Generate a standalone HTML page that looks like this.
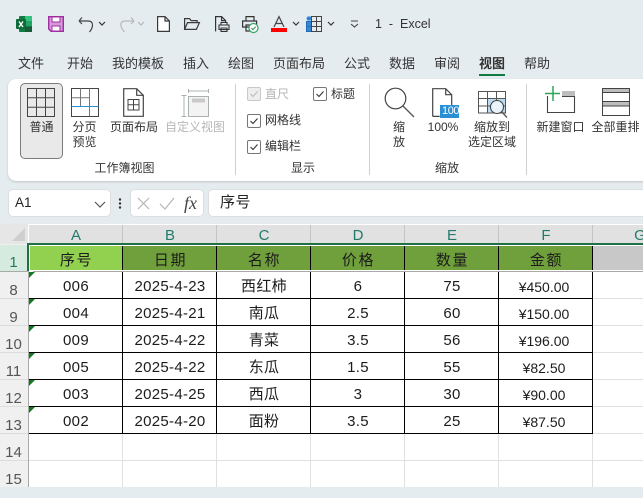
<!DOCTYPE html>
<html lang="zh"><head><meta charset="utf-8"><style>
html,body{margin:0;padding:0}
body{width:643px;height:487px;overflow:hidden;position:relative;background:#e5ecf0;font-family:"Liberation Sans","Noto Sans CJK SC",sans-serif;color:#2a2a2a}
.a{position:absolute}
.t{position:absolute;white-space:nowrap;font-size:12px;line-height:15px;text-align:center;color:#333}
.tab{position:absolute;top:55px;font-size:13px;line-height:18px;white-space:nowrap;color:#333}
svg{position:absolute;overflow:visible;fill:none}
.c{position:absolute;height:27px;line-height:30px;width:94px;text-align:center;font-size:15px;letter-spacing:.3px;color:#1c1c1c}
.m{font-size:14px;letter-spacing:0;margin-left:-2px}
.h{font-size:15px;letter-spacing:1.6px;line-height:32px;padding-left:1px;width:93px}
.ch{position:absolute;top:225px;height:19px;line-height:22px;width:94px;text-align:center;font-size:15px;color:#217a6b;background:#e1e1e1}
.rh{position:absolute;left:0;width:27px;height:27px;line-height:37px;text-align:center;font-size:15px;color:#555}
.tri{position:absolute;left:29px;width:0;height:0;border-top:6px solid #0f7b1e;border-right:6px solid transparent}
.cb{position:absolute;width:12px;height:12px;border:1px solid #777;border-radius:2px;background:#fff}
.cb svg{left:0;top:0}
</style></head><body>

<!-- quick access -->
<svg style="left:16px;top:16px" width="16" height="16"><rect x="3" y="0" width="13" height="16" rx="1" fill="#107c41"/><rect x="9" y="0" width="7" height="5" fill="#33c481"/><rect x="9" y="5" width="7" height="5" fill="#21a366"/><rect x="9" y="11" width="7" height="5" fill="#185c37"/><rect x="0" y="3" width="10" height="10" rx="1" fill="#0d6b38"/><path d="M3 5.500l4 5.500M7 5.500l-4 5.500" stroke="#fff" stroke-width="1.400"/></svg>
<svg style="left:48px;top:16px" width="16" height="16"><path d="M.7.700h14.600v14.600H3L.7 13z" fill="#d79ad9" stroke="#9e2fa1" stroke-width="1.400"/><rect x="4" y="1" width="8" height="5" fill="#fff" stroke="#9e2fa1"/><rect x="4" y="10" width="8" height="5" fill="#fff" stroke="#9e2fa1"/></svg>
<svg style="left:78px;top:15px" width="18" height="18"><path d="M1 6h9c6 0 5.500 6 1.500 11M1 6l3-3.500M1 6l3 3" stroke="#444" stroke-width="1.200"/></svg>
<svg style="left:98px;top:21px" width="8" height="5"><path d="M1 1l3 3 3-3" stroke="#333" stroke-width="1.200"/></svg>
<svg style="left:117px;top:15px" width="18" height="18"><path d="M17 6H8C2 6 3 12 7.500 17M17 6l-3-3.500M17 6l-3 3" stroke="#b3b8bb" stroke-width="1.200"/></svg>
<svg style="left:137px;top:21px" width="8" height="5"><path d="M1 1l3 3 3-3" stroke="#b3b8bb" stroke-width="1.200"/></svg>
<svg style="left:157px;top:16px" width="13" height="16"><path d="M.6.600h7.400l4.400 4.400v10.400H.6zM8 .6v4.400h4.400" fill="#fff" stroke="#3a3a3a" stroke-width="1.200"/></svg>
<svg style="left:184px;top:18px" width="16" height="12"><path d="M.6 11V.6h5l1.500 2h6v2M.6 11.400h11.800L15.400 4.600H3.500L.6 11.400z" stroke="#3a3a3a" stroke-width="1.200"/></svg>
<svg style="left:215px;top:16px" width="14" height="16"><path d="M.6 15.400V.6h6l4 4v2M6.600.6v4h4" stroke="#333" stroke-width="1.200"/><path d="M4 9h10v4.500H4zM6 9V6.500h6V9M6 12h6v3.400H6z" fill="#e5ecf0" stroke="#333" stroke-width="1.100"/></svg>
<svg style="left:242px;top:16px" width="17" height="17"><path d="M4 5V.6h8V5M.6 5h14v6H.6zM4 9h5v6H4z" fill="#e5ecf0" stroke="#333" stroke-width="1.200"/><circle cx="11.500" cy="12" r="4.500" fill="#fff" stroke="#3fa869" stroke-width="1.300"/><path d="M9.300 12l1.700 1.700 2.800-3" stroke="#3fa869" stroke-width="1.200"/></svg>
<div class="a" style="left:271px;top:28px;width:16px;height:4px;background:#ff0000"></div>
<svg style="left:272px;top:16px" width="14" height="11"><path d="M2 11L7 .6l5 10.400M3.800 7.500h6.400" stroke="#444" stroke-width="1.200"/></svg>
<svg style="left:292px;top:21px" width="8" height="5"><path d="M1 1l3 3 3-3" stroke="#333" stroke-width="1.200"/></svg>
<svg style="left:306px;top:16px" width="16" height="16"><rect x=".5" y="5.500" width="5" height="5" fill="#3a87cf" stroke="#1f6fb8"/><rect x=".5" y="10.500" width="5" height="5" fill="#3a87cf" stroke="#1f6fb8"/><path d="M5.500 .5h10v15h-10zM5.500 5.500h10M5.500 10.500h10M10.500.5v15" stroke="#444"/><path d="M3 0v5M.5 2.500h5M1 .7l4 3.600M5 .7l-4 3.600" stroke="#1f7fd0"/></svg>
<svg style="left:327px;top:21px" width="8" height="5"><path d="M1 1l3 3 3-3" stroke="#333" stroke-width="1.200"/></svg>
<svg style="left:350px;top:20px" width="9" height="8"><path d="M1 1h7M1 4l3.500 3L8 4" stroke="#444" stroke-width="1.100"/></svg>
<div class="t" style="left:375px;top:16px;font-size:12.500px;line-height:16px">1&nbsp; -&nbsp; Excel</div>

<!-- tabs -->
<div class="tab" style="left:18px">文件</div>
<div class="tab" style="left:67px">开始</div>
<div class="tab" style="left:112px">我的模板</div>
<div class="tab" style="left:183px">插入</div>
<div class="tab" style="left:228px">绘图</div>
<div class="tab" style="left:273px">页面布局</div>
<div class="tab" style="left:344px">公式</div>
<div class="tab" style="left:389px">数据</div>
<div class="tab" style="left:434px">审阅</div>
<div class="tab" style="left:479px;font-weight:700">视图</div>
<div class="a" style="left:479px;top:73.500px;width:26px;height:2px;background:#107c41"></div>
<div class="tab" style="left:524px">帮助</div>

<!-- ribbon -->
<div class="a" style="left:8px;top:79px;width:660px;height:102px;background:#fff;border-radius:8px;box-shadow:0 1px 2px rgba(0,0,0,.18)"></div>
<div class="a" style="left:20px;top:83px;width:41px;height:74px;background:#e9e9e9;border:1px solid #7b7b7b;border-radius:5px"></div>
<svg style="left:27px;top:88px" width="28" height="29"><path d="M.5.500h27v28H.5zM.5 9.800h27M.5 19.200h27M9.500.5v28M18.500.5v28" stroke="#444"/></svg>
<svg style="left:71px;top:88px" width="28" height="29"><path d="M.5.500h27v28H.5z" stroke="#444"/><path d="M.5 9.800h18M9.500.5v18" stroke="#777"/><path d="M.5 18.500h27M18.500.5v28" stroke="#2e8fd0"/></svg>
<svg style="left:123px;top:88px" width="21" height="29"><path d="M.7.700h13l6.600 6.600v21H.7zM13.700.7v6.600h6.600" stroke="#444" stroke-width="1.200"/><path d="M5 11.500h11v10.500H5zM5 16.700h11M10.500 11.500v10.500" stroke="#444"/></svg>
<svg style="left:181px;top:88px" width="28" height="30" stroke="#aab0b2"><path d="M7.500 1v4M27.500 1v4M7.500 3h20" stroke-width="1"/><path d="M.5 7.500h5M.5 28.500h5M3 7.500v21"/><rect x="7.500" y="8.500" width="20" height="20" fill="#f3f3f3"/><rect x="11" y="10.500" width="13" height="4" fill="#c9c9c9" stroke="none"/></svg>

<div class="t" style="left:20px;width:43px;top:120px;font-size:12px">普通</div>
<div class="t" style="left:63px;width:43px;top:120px">分页<br>预览</div>
<div class="t" style="left:106px;width:56px;top:120px">页面布局</div>
<div class="t" style="left:160px;width:70px;top:120px;color:#b7b7b7">自定义视图</div>
<div class="t" style="left:94px;width:61px;top:161px">工作簿视图</div>
<div class="a" style="left:235px;top:84px;width:1px;height:91px;background:#cfcfcf"></div>

<div class="cb" style="left:247px;top:87px;border-color:#c9c9c9;background:#eee"><svg width="12" height="12"><path d="M2.500 6l2.500 2.500 4.500-5" stroke="#bbb" stroke-width="1.100"/></svg></div>
<div class="t" style="left:265px;top:87px;color:#b5b5b5">直尺</div>
<div class="cb" style="left:313px;top:87px"><svg width="12" height="12"><path d="M2.500 6l2.500 2.500 4.500-5" stroke="#333" stroke-width="1.100"/></svg></div>
<div class="t" style="left:331px;top:87px">标题</div>
<div class="cb" style="left:247px;top:114px"><svg width="12" height="12"><path d="M2.500 6l2.500 2.500 4.500-5" stroke="#333" stroke-width="1.100"/></svg></div>
<div class="t" style="left:265px;top:113px">网格线</div>
<div class="cb" style="left:247px;top:140px"><svg width="12" height="12"><path d="M2.500 6l2.500 2.500 4.500-5" stroke="#333" stroke-width="1.100"/></svg></div>
<div class="t" style="left:265px;top:139px">编辑栏</div>
<div class="t" style="left:291px;top:161px">显示</div>
<div class="a" style="left:369px;top:84px;width:1px;height:91px;background:#cfcfcf"></div>

<svg style="left:384px;top:87px" width="31" height="31"><circle cx="11.500" cy="11.500" r="10.300" stroke="#444" stroke-width="1.200"/><path d="M19 19l11 11" stroke="#555" stroke-width="1.300"/></svg>
<div class="t" style="left:389px;width:20px;top:120px">缩<br>放</div>
<svg style="left:432px;top:88px" width="27" height="30"><path d="M.7 28.400V.700h13l6 6V17M13.700.7v6h6M.7 28.400h7" stroke="#444" stroke-width="1.200"/><rect x="8" y="17" width="19" height="13" fill="#2b8fd6"/></svg>
<div class="t" style="left:442px;top:105px;font-size:11px;line-height:13px;color:#fff;letter-spacing:-.4px">100</div>
<div class="t" style="left:425px;width:36px;top:120px">100%</div>
<svg style="left:478px;top:91px" width="30" height="27"><rect x="10" y="8" width="18" height="14" fill="#bcdcf3"/><path d="M.5.500h27v21.500H.5zM.5 7.500h27M.5 15h27M9.500.5v21.500M18.500.5v21.500" stroke="#555"/><circle cx="19" cy="16" r="6.500" fill="#e8f3fb" stroke="#444" stroke-width="1.100"/><path d="M23.500 20.500l5.500 6" stroke="#555" stroke-width="1.300"/></svg>
<div class="t" style="left:467px;width:50px;top:120px">缩放到<br>选定区域</div>
<div class="t" style="left:435px;top:161px">缩放</div>
<div class="a" style="left:526px;top:84px;width:1px;height:91px;background:#cfcfcf"></div>

<svg style="left:545px;top:86px" width="31" height="28"><path d="M2.500 10v16.500h27V10" stroke="#444" stroke-width="1.100"/><rect x="17" y="5" width="13" height="5" fill="#bdbdbd"/><path d="M17 10.500h13" stroke="#444"/><path d="M8 0v15M0 7.500h15" stroke="#2ca55a" stroke-width="1.500"/></svg>
<div class="t" style="left:536px;width:49px;top:120px">新建窗口</div>
<svg style="left:602px;top:88px" width="28" height="28"><rect x=".5" y=".5" width="27" height="27" fill="#fff" stroke="#444"/><rect x="1" y="1" width="26" height="3.500" fill="#bdbdbd"/><rect x="1" y="14" width="26" height="4" fill="#bdbdbd"/><path d="M.5 4.500h27M.5 13.500h27M.5 18h27" stroke="#444"/></svg>
<div class="t" style="left:591px;width:49px;top:120px">全部重排</div>

<!-- formula bar -->
<div class="a" style="left:8px;top:189px;width:101px;height:26px;background:#fff;border:1px solid #dcdfe2;border-radius:5px"></div>
<div class="t" style="left:15px;top:195px;font-size:13.500px;color:#222">A1</div>
<svg style="left:94px;top:201px" width="12" height="7"><path d="M1 1l5 5 5-5" stroke="#555" stroke-width="1.200"/></svg>
<svg style="left:118px;top:198px" width="4" height="11"><circle cx="2" cy="1.500" r="1.200" fill="#333"/><circle cx="2" cy="5.500" r="1.200" fill="#333"/><circle cx="2" cy="9.500" r="1.200" fill="#333"/></svg>
<div class="a" style="left:130px;top:189px;width:72px;height:26px;background:#fff;border:1px solid #dcdfe2;border-radius:5px"></div>
<svg style="left:137px;top:197px" width="13" height="13"><path d="M1 1l11 11M12 1L1 12" stroke="#b5b5b5" stroke-width="1.200"/></svg>
<svg style="left:159px;top:197px" width="16" height="13"><path d="M1 7l5 5L15 1" stroke="#b5b5b5" stroke-width="1.200"/></svg>
<div class="t" style="left:184px;top:193px;font:italic 400 18px/20px 'Liberation Serif',serif;color:#444">fx</div>
<div class="a" style="left:208px;top:189px;width:450px;height:26px;background:#fff;border:1px solid #dcdfe2;border-radius:5px"></div>
<div class="t" style="left:220px;top:193px;font-size:15px;line-height:19px;letter-spacing:.5px;color:#222">序号</div>

<!-- sheet -->
<div class="a" style="left:0;top:224px;width:643px;height:263px;background:#fff"></div>
<div class="a" style="left:0;top:224px;width:28px;height:263px;background:#f0f0f0"></div>
<div class="a" style="left:0;top:224px;width:28px;height:20px;background:#e6e6e6"></div>
<svg style="left:12px;top:228px" width="14" height="14"><path d="M13 0v13H0z" fill="#cfcfcf"/></svg>
<div class="ch" style="left:29px">A</div>
<div class="ch" style="left:123px">B</div>
<div class="ch" style="left:217px">C</div>
<div class="ch" style="left:311px">D</div>
<div class="ch" style="left:405px">E</div>
<div class="ch" style="left:499px">F</div>
<div class="ch" style="left:593px;width:94px">G</div>
<div class="a" style="left:122px;top:225px;width:1px;height:19px;background:#c4c4c4"></div>
<div class="a" style="left:216px;top:225px;width:1px;height:19px;background:#c4c4c4"></div>
<div class="a" style="left:310px;top:225px;width:1px;height:19px;background:#c4c4c4"></div>
<div class="a" style="left:404px;top:225px;width:1px;height:19px;background:#c4c4c4"></div>
<div class="a" style="left:498px;top:225px;width:1px;height:19px;background:#c4c4c4"></div>
<div class="a" style="left:592px;top:225px;width:1px;height:19px;background:#c4c4c4"></div>

<div class="a" style="left:0;top:245px;width:28px;height:26px;background:#d6ebdf"></div>
<div class="rh" style="top:246px;color:#217a5a;line-height:33px">1</div>
<div class="rh" style="top:272px">8</div>
<div class="rh" style="top:299px">9</div>
<div class="rh" style="top:326px">10</div>
<div class="rh" style="top:353px">11</div>
<div class="rh" style="top:380px">12</div>
<div class="rh" style="top:407px">13</div>
<div class="rh" style="top:434px">14</div>
<div class="rh" style="top:461px">15</div>
<div class="a" style="left:0;top:271px;width:29px;height:1px;background:#a9a9a9"></div>
<div class="a" style="left:0;top:298px;width:28px;height:1px;background:#dcdcdc"></div>
<div class="a" style="left:0;top:325px;width:28px;height:1px;background:#dcdcdc"></div>
<div class="a" style="left:0;top:352px;width:28px;height:1px;background:#dcdcdc"></div>
<div class="a" style="left:0;top:379px;width:28px;height:1px;background:#dcdcdc"></div>
<div class="a" style="left:0;top:406px;width:28px;height:1px;background:#dcdcdc"></div>
<div class="a" style="left:0;top:433px;width:28px;height:1px;background:#dcdcdc"></div>
<div class="a" style="left:0;top:460px;width:28px;height:1px;background:#dcdcdc"></div>
<div class="a" style="left:28px;top:272px;width:1px;height:215px;background:#a9a9a9"></div>

<!-- header row -->
<div class="a" style="left:593px;top:246px;width:50px;height:24px;background:#c8c8c8"></div>
<div class="a" style="left:123px;top:246px;width:470px;height:24px;background:#70a03c"></div>
<div class="a" style="left:30px;top:246px;width:92px;height:24px;background:#92d050"></div>
<div class="a" style="left:29px;top:270px;width:614px;height:1px;background:#fff"></div>
<div class="a" style="left:29px;top:271px;width:614px;height:1px;background:#a9a9a9"></div>
<div class="a" style="left:27px;top:243px;width:616px;height:2px;background:#1f7145"></div>
<div class="a" style="left:27px;top:243px;width:2px;height:28px;background:#1f7145"></div>
<div class="a" style="left:29px;top:245px;width:1px;height:25px;background:#fff"></div>
<div class="a" style="left:29px;top:245px;width:614px;height:1px;background:#fff"></div>
<div class="a" style="left:29px;top:270px;width:4px;height:2px;background:#fff"></div>

<div class="c h" style="left:29px;top:245px">序号</div>
<div class="c h" style="left:123px;top:245px">日期</div>
<div class="c h" style="left:217px;top:245px">名称</div>
<div class="c h" style="left:311px;top:245px">价格</div>
<div class="c h" style="left:405px;top:245px">数量</div>
<div class="c h" style="left:499px;top:245px">金额</div>

<!-- light gridlines below / right -->
<div class="a" style="left:29px;top:460px;width:614px;height:1px;background:#e0e0e0"></div>
<div class="a" style="left:593px;top:298px;width:50px;height:1px;background:#e0e0e0"></div>
<div class="a" style="left:593px;top:325px;width:50px;height:1px;background:#e0e0e0"></div>
<div class="a" style="left:593px;top:352px;width:50px;height:1px;background:#e0e0e0"></div>
<div class="a" style="left:593px;top:379px;width:50px;height:1px;background:#e0e0e0"></div>
<div class="a" style="left:593px;top:406px;width:50px;height:1px;background:#e0e0e0"></div>
<div class="a" style="left:29px;top:433px;width:614px;height:1px;background:#e0e0e0"></div>
<div class="a" style="left:122px;top:434px;width:1px;height:53px;background:#e0e0e0"></div>
<div class="a" style="left:216px;top:434px;width:1px;height:53px;background:#e0e0e0"></div>
<div class="a" style="left:310px;top:434px;width:1px;height:53px;background:#e0e0e0"></div>
<div class="a" style="left:404px;top:434px;width:1px;height:53px;background:#e0e0e0"></div>
<div class="a" style="left:498px;top:434px;width:1px;height:53px;background:#e0e0e0"></div>
<div class="a" style="left:592px;top:434px;width:1px;height:53px;background:#e0e0e0"></div>

<!-- black table lines -->
<div class="a" style="left:29px;top:298px;width:564px;height:1px;background:#000"></div>
<div class="a" style="left:29px;top:325px;width:564px;height:1px;background:#000"></div>
<div class="a" style="left:29px;top:352px;width:564px;height:1px;background:#000"></div>
<div class="a" style="left:29px;top:379px;width:564px;height:1px;background:#000"></div>
<div class="a" style="left:29px;top:406px;width:564px;height:1px;background:#000"></div>
<div class="a" style="left:29px;top:433px;width:564px;height:1px;background:#000"></div>
<div class="a" style="left:122px;top:246px;width:1px;height:24px;background:#000"></div>
<div class="a" style="left:216px;top:246px;width:1px;height:24px;background:#000"></div>
<div class="a" style="left:310px;top:246px;width:1px;height:24px;background:#000"></div>
<div class="a" style="left:404px;top:246px;width:1px;height:24px;background:#000"></div>
<div class="a" style="left:498px;top:246px;width:1px;height:24px;background:#000"></div>
<div class="a" style="left:592px;top:246px;width:1px;height:24px;background:#000"></div>
<div class="a" style="left:122px;top:272px;width:1px;height:162px;background:#000"></div>
<div class="a" style="left:216px;top:272px;width:1px;height:162px;background:#000"></div>
<div class="a" style="left:310px;top:272px;width:1px;height:162px;background:#000"></div>
<div class="a" style="left:404px;top:272px;width:1px;height:162px;background:#000"></div>
<div class="a" style="left:498px;top:272px;width:1px;height:162px;background:#000"></div>
<div class="a" style="left:592px;top:272px;width:1px;height:162px;background:#000"></div>

<div class="tri" style="top:272px"></div>
<div class="tri" style="top:299px"></div>
<div class="tri" style="top:326px"></div>
<div class="tri" style="top:353px"></div>
<div class="tri" style="top:380px"></div>
<div class="tri" style="top:407px"></div>

<!-- data -->
<div class="c" style="left:29px;top:272px">006</div><div class="c" style="left:123px;top:272px">2025-4-23</div><div class="c" style="left:217px;top:272px">西红柿</div><div class="c" style="left:311px;top:272px">6</div><div class="c" style="left:405px;top:272px">75</div><div class="c m" style="left:499px;top:272px">¥450.00</div>
<div class="c" style="left:29px;top:299px">004</div><div class="c" style="left:123px;top:299px">2025-4-21</div><div class="c" style="left:217px;top:299px">南瓜</div><div class="c" style="left:311px;top:299px">2.5</div><div class="c" style="left:405px;top:299px">60</div><div class="c m" style="left:499px;top:299px">¥150.00</div>
<div class="c" style="left:29px;top:326px">009</div><div class="c" style="left:123px;top:326px">2025-4-22</div><div class="c" style="left:217px;top:326px">青菜</div><div class="c" style="left:311px;top:326px">3.5</div><div class="c" style="left:405px;top:326px">56</div><div class="c m" style="left:499px;top:326px">¥196.00</div>
<div class="c" style="left:29px;top:353px">005</div><div class="c" style="left:123px;top:353px">2025-4-22</div><div class="c" style="left:217px;top:353px">东瓜</div><div class="c" style="left:311px;top:353px">1.5</div><div class="c" style="left:405px;top:353px">55</div><div class="c m" style="left:499px;top:353px">¥82.50</div>
<div class="c" style="left:29px;top:380px">003</div><div class="c" style="left:123px;top:380px">2025-4-25</div><div class="c" style="left:217px;top:380px">西瓜</div><div class="c" style="left:311px;top:380px">3</div><div class="c" style="left:405px;top:380px">30</div><div class="c m" style="left:499px;top:380px">¥90.00</div>
<div class="c" style="left:29px;top:407px">002</div><div class="c" style="left:123px;top:407px">2025-4-20</div><div class="c" style="left:217px;top:407px">面粉</div><div class="c" style="left:311px;top:407px">3.5</div><div class="c" style="left:405px;top:407px">25</div><div class="c m" style="left:499px;top:407px">¥87.50</div>

</body></html>
